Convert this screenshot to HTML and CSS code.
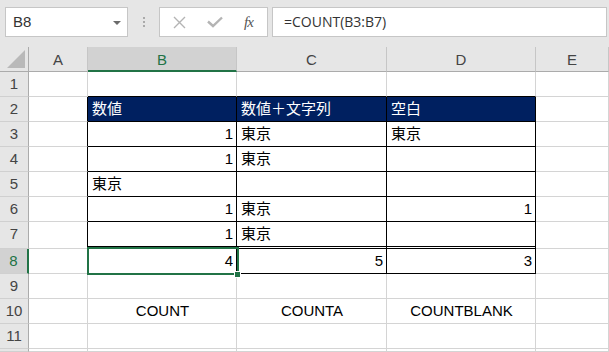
FILE: index.html
```html
<!DOCTYPE html>
<html>
<head>
  <meta charset="utf-8">
  <title>COUNT / COUNTA / COUNTBLANK</title>
  <link rel="stylesheet" href="styles.css">
</head>
<body>

<div class="bar">
  <div class="namebox">B8<span class="drop"></span></div>
  <div class="grip"><i></i><i></i><i></i></div>
  <div class="btns">
    <svg class="ico-x" width="13" height="13" viewBox="0 0 13 13"><path d="M1 1 L12 12 M12 1 L1 12" /></svg>
    <svg class="ico-ok" width="16" height="12" viewBox="0 0 16 12"><path d="M1 5.5 L6 10 L15 1.5" /></svg>
    <span class="fx">fx</span>
  </div>
  <div class="formula">=COUNT(B3:B7)</div>
</div>

<div class="sheet">
  <div class="corner"><span></span></div>
  <div class="ch">A</div>
  <div class="ch sel">B</div>
  <div class="ch">C</div>
  <div class="ch">D</div>
  <div class="ch">E</div>

  <div class="rh">1</div>
  <div class="c"></div>
  <div class="c tb"></div>
  <div class="c tb"></div>
  <div class="c tb"></div>
  <div class="c"></div>

  <div class="rh">2</div>
  <div class="c lb"></div>
  <div class="t hd">数値</div>
  <div class="t hd">数値＋文字列</div>
  <div class="t hd">空白</div>
  <div class="c"></div>

  <div class="rh">3</div>
  <div class="c lb"></div>
  <div class="t num">1</div>
  <div class="t">東京</div>
  <div class="t">東京</div>
  <div class="c"></div>

  <div class="rh">4</div>
  <div class="c lb"></div>
  <div class="t num">1</div>
  <div class="t">東京</div>
  <div class="t"></div>
  <div class="c"></div>

  <div class="rh">5</div>
  <div class="c lb"></div>
  <div class="t">東京</div>
  <div class="t"></div>
  <div class="t"></div>
  <div class="c"></div>

  <div class="rh">6</div>
  <div class="c lb"></div>
  <div class="t num">1</div>
  <div class="t">東京</div>
  <div class="t num">1</div>
  <div class="c"></div>

  <div class="rh">7</div>
  <div class="c lb"></div>
  <div class="t dbl num">1</div>
  <div class="t dbl">東京</div>
  <div class="t dbl"></div>
  <div class="c"></div>

  <div class="rh sel">8</div>
  <div class="c lb"></div>
  <div class="t num">4</div>
  <div class="t num">5</div>
  <div class="t num">3</div>
  <div class="c"></div>

  <div class="rh">9</div>
  <div class="c"></div>
  <div class="c"></div>
  <div class="c"></div>
  <div class="c"></div>
  <div class="c"></div>

  <div class="rh">10</div>
  <div class="c"></div>
  <div class="c mid">COUNT</div>
  <div class="c mid">COUNTA</div>
  <div class="c mid">COUNTBLANK</div>
  <div class="c"></div>

  <div class="rh">11</div>
  <div class="c"></div>
  <div class="c"></div>
  <div class="c"></div>
  <div class="c"></div>
  <div class="c"></div>

  <div class="rh"></div>
  <div class="c"></div>
  <div class="c"></div>
  <div class="c"></div>
  <div class="c"></div>
  <div class="c"></div>

  <div class="cursor"><span class="handle"></span></div>
</div>

</body>
</html>
```

FILE: styles.css
```css
* { box-sizing: border-box; }
body { margin:0; width:609px; height:352px; overflow:hidden; background:#e6e6e6; font-family:"Liberation Sans", "Noto Sans CJK JP", sans-serif; }

/* formula bar */
.bar { height:47px; display:flex; align-items:flex-start; padding:7px 0 0 5px; }
.namebox { position:relative; width:123px; height:30px; background:#fff; border:1px solid #c6c6c6; padding-left:7px; font-size:15px; line-height:28px; color:#333; }
.drop { position:absolute; right:6px; top:13px; border-left:4px solid transparent; border-right:4px solid transparent; border-top:4px solid #6b6b6b; }
.grip { width:31px; height:30px; display:flex; flex-direction:column; align-items:center; justify-content:center; gap:2px; }
.grip i { width:2px; height:2px; background:#aaa; }
.btns { width:109px; height:30px; background:#fff; border:1px solid #c6c6c6; display:flex; align-items:center; padding-left:13px; }
.btns path { fill:none; stroke:#b4b4b4; }
.ico-x path { stroke-width:1.4; }
.ico-ok { margin-left:21px; }
.ico-ok path { stroke-width:2.4; }
.fx { margin-left:21px; font:italic 15px "Liberation Serif", serif; color:#555; letter-spacing:-1px; }
.formula { margin-left:4px; width:335px; height:30px; background:#fff; border:1px solid #c6c6c6; padding-left:11px; font:14px "Open Sans", sans-serif; line-height:28px; color:#333; }

/* grid */
.sheet { position:relative; display:grid; grid-template-columns:29px 59px 149px 150px 149px 73px; grid-template-rows:25px repeat(6, 25px) 27px repeat(4, 25px) 3px; background:#fff; }
.corner { background:#e6e6e6; border-right:1px solid #ababab; border-bottom:1px solid #ababab; display:flex; justify-content:flex-end; align-items:flex-end; padding:0 3px 3px 0; }
.corner span { border-left:18px solid transparent; border-bottom:18px solid #b9b9b9; }
.ch { background:#e6e6e6; border-right:1px solid #c6c6c6; border-bottom:1px solid #ababab; text-align:center; font-size:15px; line-height:26px; color:#444; }
.ch.sel { background:#d2d2d2; color:#217346; border-bottom:2px solid #217346; }
.rh { background:#e6e6e6; border-right:1px solid #ababab; border-bottom:1px solid #d0d0d0; text-align:center; font-size:15px; line-height:24px; color:#444; }
.rh.sel { background:#d2d2d2; color:#217346; border-right:2px solid #217346; }

.c, .t { border-right:1px solid #d4d4d4; border-bottom:1px solid #d4d4d4; padding:0 3px 0 4px; font-size:15px; line-height:24px; color:#000; white-space:nowrap; }
.t { border-right-color:#000; border-bottom-color:#000; }
.lb { border-right-color:#000; }
.tb { border-bottom-color:#000; }
.hd { background:#002060; color:#fff; }
.dbl { border-bottom:3px double #000; }
.num { text-align:right; }
.mid { text-align:center; }

.cursor { position:absolute; left:87px; top:200px; width:152px; height:28px; border:2px solid #217346; }
.handle { position:absolute; right:-4px; bottom:-5px; width:7px; height:7px; background:#217346; border:1px solid #fff; }
```
